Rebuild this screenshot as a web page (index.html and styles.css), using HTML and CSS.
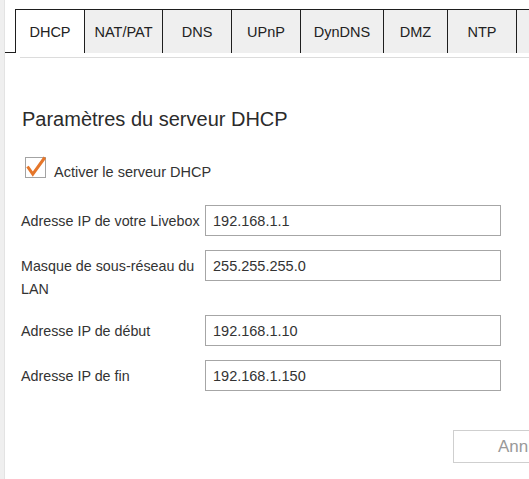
FILE: index.html
```html
<!DOCTYPE html>
<html lang="fr">
<head>
<meta charset="utf-8">
<title>DHCP</title>
<link rel="stylesheet" href="styles.css">
</head>
<body>
<div class="page">
  <div class="strip"></div>
  <div class="main">
    <nav class="tabs">
      <div class="tab active t-dhcp">DHCP</div>
      <div class="tab t-nat">NAT/PAT</div>
      <div class="tab t-dns">DNS</div>
      <div class="tab t-upnp">UPnP</div>
      <div class="tab t-dyn">DynDNS</div>
      <div class="tab t-dmz">DMZ</div>
      <div class="tab t-ntp">NTP</div>
      <div class="tab t-more"></div>
    </nav>
    <div class="rule"></div>
    <section class="panel">
      <h1 class="title">Paramètres du serveur DHCP</h1>
      <label class="check">
        <span class="box">
          <svg width="21" height="21" viewBox="0 0 21 21"><path d="M2.5 9.5 L7.8 17.2 L19.8 0.5" fill="none" stroke="#e5762a" stroke-width="3"/></svg>
        </span>
        <span class="check-label">Activer le serveur DHCP</span>
      </label>
      <div class="form">
        <div class="row"><span class="lbl">Adresse IP de votre Livebox</span><input class="field" type="text" value="192.168.1.1"></div>
        <div class="row"><span class="lbl">Masque de sous-réseau du LAN</span><input class="field" type="text" value="255.255.255.0"></div>
        <div class="row"><span class="lbl">Adresse IP de début</span><input class="field" type="text" value="192.168.1.10"></div>
        <div class="row"><span class="lbl">Adresse IP de fin</span><input class="field" type="text" value="192.168.1.150"></div>
      </div>
      <div class="actions"><button class="btn" type="button">Annuler</button></div>
    </section>
  </div>
</div>
</body>
</html>
```
FILE: styles.css
```css
html, body {
  margin: 0;
  padding: 0;
  background: #fff;
  overflow: hidden;
}
body {
  font-family: "Liberation Sans", Arial, sans-serif;
  color: #333;
  width: 529px;
  height: 479px;
}
.page {
  display: flex;
  height: 479px;
}
.strip {
  width: 4px;
  flex-shrink: 0;
  background: #efefef;
  border-right: 1px solid #e3e3e3;
}
.main {
  flex: 1;
  min-width: 0;
  overflow: hidden;
}
.tabs {
  display: flex;
  padding-top: 9px;
}
.tabs::before {
  content: "";
  width: 10px;
  flex-shrink: 0;
  border-bottom: 1px solid #1e1e1e;
}
.tab {
  flex-shrink: 0;
  box-sizing: border-box;
  height: 44px;
  border-top: 1px solid #1e1e1e;
  border-left: 1px solid #1e1e1e;
  background: #efefef;
  display: flex;
  align-items: center;
  justify-content: center;
  font-size: 14.5px;
  color: #222;
}
.tab.active { background: #fff; }
.t-dhcp { width: 69px; }
.t-nat { width: 78px; }
.t-dns { width: 69px; }
.t-upnp { width: 69px; }
.t-dyn { width: 83px; }
.t-dmz { width: 64px; }
.t-ntp { width: 69px; }
.t-more { width: 60px; }
.rule {
  margin: 4px 0 0 15px;
  height: 1px;
  background: #dcdcdc;
}
.panel {
  padding-left: 16px;
}
.title {
  margin: 49px 0 0 1px;
  font-size: 20px;
  line-height: 24px;
  font-weight: normal;
  color: #2b2b2b;
}
.check {
  display: flex;
  align-items: flex-start;
  margin: 26px 0 0 4px;
  height: 21px;
}
.box {
  width: 21px;
  height: 21px;
  box-sizing: border-box;
  border: 1px solid #a3a3a3;
  background: #fff;
  position: relative;
}
.box svg {
  position: absolute;
  left: -1px;
  top: -1px;
  overflow: visible;
}
.check-label {
  margin-left: 8px;
  margin-top: 4px;
  font-size: 14.5px;
  line-height: 22px;
  color: #333;
}
.form {
  margin-top: 27px;
  display: flex;
  flex-direction: column;
  gap: 14px;
}
.row {
  display: grid;
  grid-template-columns: 184px 296px;
  align-items: start;
}
.lbl {
  padding-top: 5px;
  font-size: 14.3px;
  line-height: 23px;
  color: #333;
}
.field {
  box-sizing: border-box;
  width: 296px;
  height: 31px;
  margin: 0;
  border: 1px solid #a6a6a6;
  border-radius: 0;
  padding: 0 7px;
  font-family: "Liberation Sans", Arial, sans-serif;
  font-size: 14.5px;
  color: #333;
  background: #fff;
  outline: none;
}
.actions {
  display: flex;
  margin-top: 39px;
  padding-left: 432px;
}
.btn {
  flex-shrink: 0;
  box-sizing: border-box;
  width: 147px;
  height: 33px;
  border: 1px solid #cfcfcf;
  background: #fff;
  color: #999;
  font-family: "Liberation Sans", Arial, sans-serif;
  font-size: 17px;
  padding: 0 0 0 44px;
  text-align: left;
}
```
